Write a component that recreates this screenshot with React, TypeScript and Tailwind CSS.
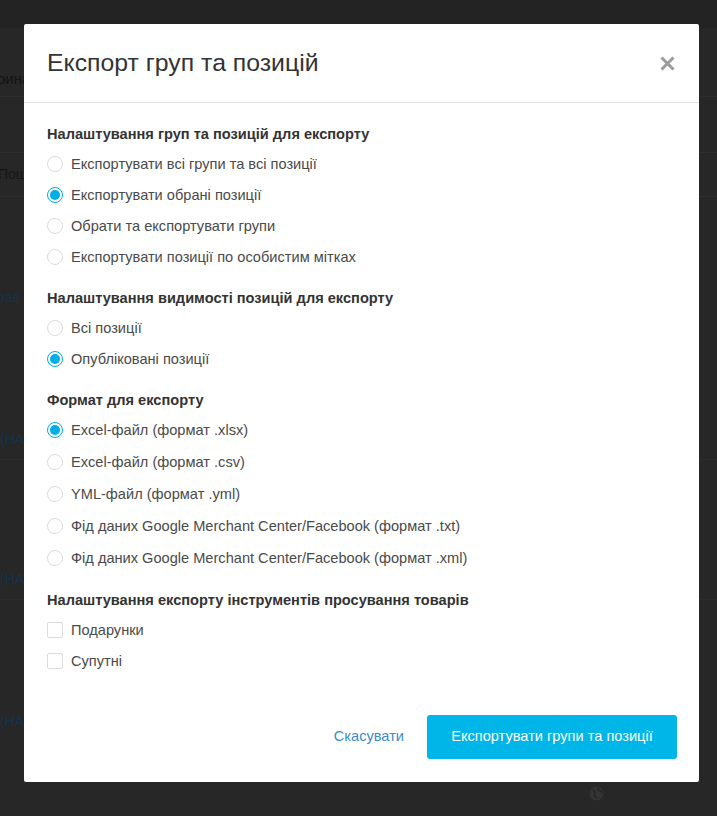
import React from "react";

const Radio = ({ checked }: { checked?: boolean }) =>
  checked ? (
    <span className="flex h-4 w-4 shrink-0 items-center justify-center rounded-full border border-[#00aee8] bg-white">
      <span className="h-[10px] w-[10px] rounded-full bg-[#00aee8]" />
    </span>
  ) : (
    <span className="h-4 w-4 shrink-0 rounded-full border border-[#dcdcdc] bg-white" />
  );

const Check = () => <span className="h-4 w-4 shrink-0 rounded-[2px] border border-[#dcdcdc] bg-white" />;

const Row = ({ label, checked, box, tall }: { label: string; checked?: boolean; box?: boolean; tall?: boolean }) => (
  <div className={`flex items-center gap-2 ${tall ? "h-[32px]" : "h-[31px]"}`}>
    {box ? <Check /> : <Radio checked={checked} />}
    <span className="text-[14.6px] leading-5 text-[#4a4a4a]">{label}</span>
  </div>
);

const Section = ({ title, children, first }: { title: string; children: React.ReactNode; first?: boolean }) => (
  <div className={first ? "" : "mt-4"}>
    <div className="text-[14.6px] font-bold leading-5 text-[#333]">{title}</div>
    <div className="mt-1">{children}</div>
  </div>
);

export default function App() {
  return (
    <div className="relative h-[816px] w-[717px] overflow-hidden bg-[#272727]" style={{ fontFamily: '"Liberation Sans", Arial, sans-serif' }}>
      {/* background page (dimmed) */}
      <div className="h-[28px] bg-[#232323]" />
      <div className="flex h-[69px] items-end border-b border-[#2e2e2e] pb-[6px] text-[15px] text-[#141414]">
        <span className="-ml-[3px]">оина</span>
      </div>
      <div className="h-[55px]" />
      <div className="flex h-[45px] items-center border-y border-[#2f2f2f] text-[14px] text-[#161616]">
        <span className="-ml-[2px]">Пош</span>
      </div>
      <div className="flex h-[120px] items-end pb-[9px] text-[14px] text-[#16324a]">
        <span className="-ml-[3px]">рав</span>
      </div>
      <div className="flex h-[142px] items-end pb-[9px] text-[14px] text-[#16324a]">
        <span>(НА</span>
      </div>
      <div className="flex h-[140px] items-end border-t border-[#2b2b2b] pb-[9px] text-[14px] text-[#16324a]">
        <span>(НА</span>
      </div>
      <div className="flex h-[142px] items-end border-t border-[#2b2b2b] pb-[9px] text-[14px] text-[#16324a]">
        <span>(НА</span>
      </div>
      <svg className="absolute left-[589px] top-[786px]" width="15" height="15" viewBox="0 0 16 16">
        <circle cx="8" cy="8" r="7.5" fill="#333" />
        <path d="M4 4c2 1 3 3 2 5s1 3 3 4M10 2c-1 2 0 3 2 3s2 2 2 3" stroke="#262626" strokeWidth="1.6" fill="none" />
      </svg>

      {/* modal */}
      <div className="absolute inset-0 flex">
        <div className="ml-[24px] mt-[24px] h-[758px] w-[675px] rounded-[2px] bg-white">
          <div className="flex h-[79px] items-center justify-between border-b border-[#e3e3e3] pl-[23px] pr-[24px]">
            <h1 className="text-[24.8px] font-normal leading-8 text-[#333]">Експорт груп та позицій</h1>
            <svg width="15" height="15" viewBox="0 0 15 15" className="mt-[1px]">
              <path d="M1.5 1.5L13.5 13.5M13.5 1.5L1.5 13.5" stroke="#9b9b9b" strokeWidth="3" strokeLinecap="butt" />
            </svg>
          </div>
          <div className="px-[23px] pt-[21px]">
            <Section title="Налаштування груп та позицій для експорту" first>
              <Row label="Експортувати всі групи та всі позиції" />
              <Row label="Експортувати обрані позиції" checked />
              <Row label="Обрати та експортувати групи" />
              <Row label="Експортувати позиції по особистим мітках" />
            </Section>
            <Section title="Налаштування видимості позицій для експорту">
              <Row label="Всі позиції" />
              <Row label="Опубліковані позиції" checked />
            </Section>
            <Section title="Формат для експорту">
              <Row label="Excel-файл (формат .xlsx)" checked tall />
              <Row label="Excel-файл (формат .csv)" tall />
              <Row label="YML-файл (формат .yml)" tall />
              <Row label="Фід даних Google Merchant Center/Facebook (формат .txt)" tall />
              <Row label="Фід даних Google Merchant Center/Facebook (формат .xml)" tall />
            </Section>
            <Section title="Налаштування експорту інструментів просування товарів">
              <Row label="Подарунки" box />
              <Row label="Супутні" box />
            </Section>
          </div>
          <div className="flex items-center justify-end gap-[23px] px-[22px] pt-[39px]">
            <span className="text-[14.6px] text-[#3a8dc8]">Скасувати</span>
            <button className="h-[44px] w-[250px] rounded-[3px] bg-[#00b6e8] text-[14.6px] text-white">Експортувати групи та позиції</button>
          </div>
        </div>
      </div>
    </div>
  );
}
